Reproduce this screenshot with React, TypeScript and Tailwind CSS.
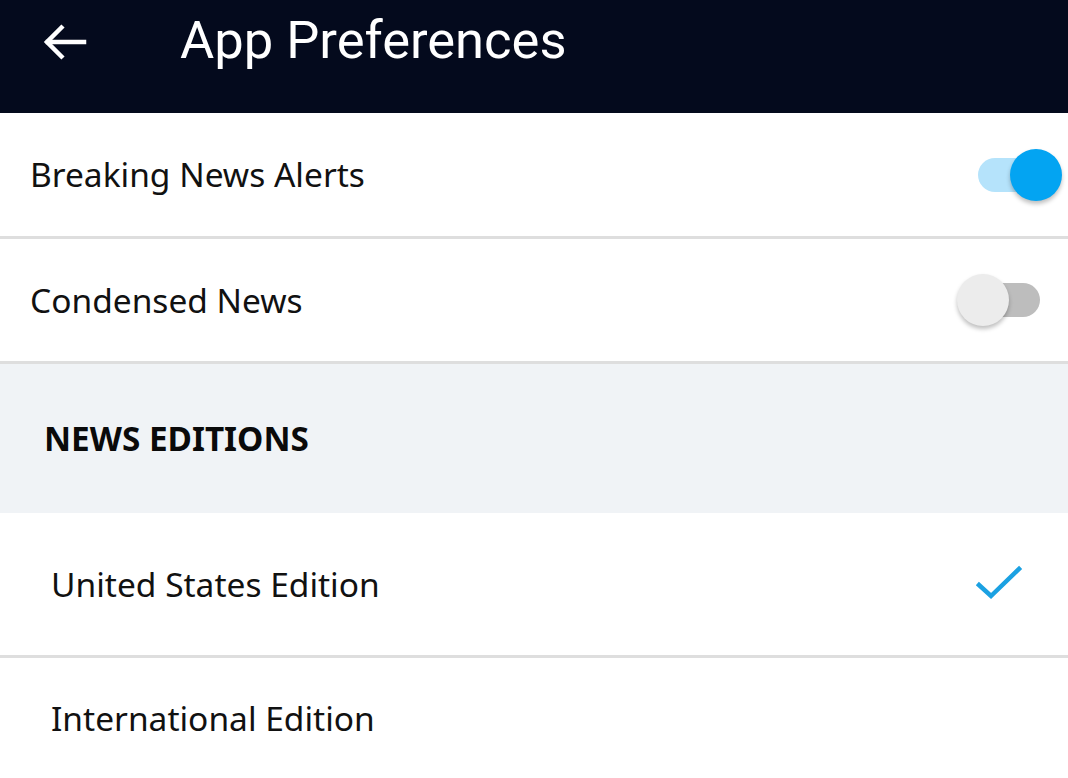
import React from "react";

function Toggle({ on }: { on: boolean }) {
  return (
    <div className={on ? "relative w-[90px] h-[56px] flex items-center" : "relative w-[83px] h-[56px] flex items-center"}>
      <div
        className={
          on
            ? "absolute left-[6px] right-[20px] h-[34px] rounded-full bg-[#b5e3fb]"
            : "absolute left-[20px] right-[0px] h-[34px] rounded-full bg-[#bdbdbd]"
        }
      />
      <div
        className={
          on
            ? "absolute right-0 w-[52px] h-[52px] rounded-full bg-[#03a4f2] shadow-[0_3px_4px_rgba(0,0,0,0.25)]"
            : "absolute left-0 w-[52px] h-[52px] rounded-full bg-[#ececec] shadow-[0_3px_4px_rgba(0,0,0,0.25)]"
        }
      />
    </div>
  );
}

export default function App() {
  const font = { fontFamily: '"Noto Sans", "Open Sans", sans-serif' };
  return (
    <div className="w-[1068px] h-[778px] overflow-hidden bg-white" style={font}>
      <div className="h-[113px] bg-[#040a1d] flex items-start pt-[16px]">
        <div className="w-[180px] pl-[40px] flex items-center h-[52px]">
          <svg width="48" height="48" viewBox="0 0 48 48" fill="none" stroke="white" strokeWidth="4.5" strokeLinecap="square">
            <path d="M44 24H8" />
            <path d="M23 8L7 24l16 16" strokeLinecap="butt" />
          </svg>
        </div>
        <div className="text-white text-[52.5px] leading-[52px] -mt-[2px]" style={{ fontFamily: 'Roboto, sans-serif' }}>
          App Preferences
        </div>
      </div>
      <div className="h-[123px] flex items-center justify-between pl-[30px] pr-[6px]">
        <span className="text-[33.5px] text-[#111]">Breaking News Alerts</span>
        <Toggle on />
      </div>
      <div className="h-[3px] bg-[#dedede]" />
      <div className="h-[122px] flex items-center justify-between pl-[30px] pr-[28px]">
        <span className="text-[33.5px] text-[#111]">Condensed News</span>
        <Toggle on={false} />
      </div>
      <div className="h-[3px] bg-[#dedede]" />
      <div className="h-[149px] bg-[#f0f3f6] flex items-center pl-[44px]">
        <span className="text-[33.3px] font-bold text-[#0a0a0a]">NEWS EDITIONS</span>
      </div>
      <div className="h-[142px] flex items-center justify-between pl-[51px] pr-[44px]">
        <span className="text-[33.5px] text-[#111]">United States Edition</span>
        <svg width="50" height="40" viewBox="0 0 50 40" fill="none" stroke="#1ba1e2" strokeWidth="4.5" strokeLinecap="square">
          <path d="M5 21l12 11L45 5" />
        </svg>
      </div>
      <div className="h-[3px] bg-[#dedede]" />
      <div className="h-[120px] flex items-center pl-[51px]">
        <span className="text-[33.5px] text-[#111]">International Edition</span>
      </div>
    </div>
  );
}
